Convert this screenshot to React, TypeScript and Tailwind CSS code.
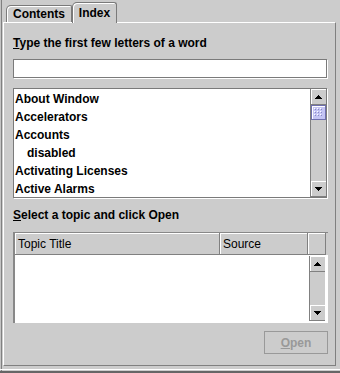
import React from 'react';

const topics = [
  { label: 'About Window', indent: false },
  { label: 'Accelerators', indent: false },
  { label: 'Accounts', indent: false },
  { label: 'disabled', indent: true },
  { label: 'Activating Licenses', indent: false },
  { label: 'Active Alarms', indent: false },
];

function Arrow({ up }: { up: boolean }) {
  const rows = [0, 1, 2, 3];
  return (
    <svg width="7" height="4" viewBox="0 0 7 4" shapeRendering="crispEdges">
      {rows.map(i => {
        const w = up ? 1 + 2 * i : 7 - 2 * i;
        return <rect key={i} x={(7 - w) / 2} y={i} width={w} height={1} fill="#000" />;
      })}
    </svg>
  );
}

function ScrollButton({ up }: { up: boolean }) {
  return (
    <div className="h-[16px] w-full shrink-0 flex items-center justify-center bg-[#cccccc] border-b border-[#808080] shadow-[inset_1px_1px_0_#fff]">
      <Arrow up={up} />
    </div>
  );
}

function Thumb() {
  return (
    <div className="h-[15px] w-full shrink-0 bg-[#c4c4f4] border border-[#6f6fae] shadow-[inset_1px_1px_0_#fff] p-[2px]">
      <svg width="100%" height="100%" shapeRendering="crispEdges">
        <defs>
          <pattern id="bumps" width="3" height="3" patternUnits="userSpaceOnUse">
            <rect x="0" y="0" width="1" height="1" fill="#ffffff" />
            <rect x="1" y="1" width="1" height="1" fill="#8a8ac4" />
          </pattern>
        </defs>
        <rect width="100%" height="100%" fill="url(#bumps)" />
      </svg>
    </div>
  );
}

function ScrollBar({ thumb }: { thumb?: boolean }) {
  return (
    <div className="w-[16px] h-full shrink-0 flex flex-col bg-[#cccccc] border-l border-[#808080]">
      <ScrollButton up />
      {thumb && <Thumb />}
      <div className="flex-1" />
      <ScrollButton up={false} />
    </div>
  );
}

function HeaderCell({ label, w }: { label: string; w: string }) {
  return (
    <div className={`${w} h-full shrink-0 flex items-center pl-[3px] pt-[1px] border-r border-b border-[#808080] shadow-[inset_1px_1px_0_#fff]`}>
      {label}
    </div>
  );
}

export default function App() {
  return (
    <div className="w-[340px] h-[373px] overflow-hidden bg-[#cccccc] flex flex-col text-[12px] leading-[16px] text-black font-['Liberation_Sans',Arial,sans-serif] shadow-[inset_1px_0_0_#c4c4c4,inset_2px_0_0_#808080]">
      <div className="h-[22px] shrink-0 flex items-end pl-[6px]">
        <div className="w-[66px] h-[17px] flex items-center justify-center font-bold border-t border-l border-r border-[#7a7a7a] rounded-tl-[5px] rounded-tr-[2px] shadow-[inset_1px_1px_0_#fff]">
          Contents
        </div>
        <div className="relative z-10 -mb-px w-[45px] h-[21px] flex items-center justify-center font-bold bg-[#cccccc] border-t border-l border-r border-[#7a7a7a] rounded-tl-[5px] rounded-tr-[3px] shadow-[inset_1px_1px_0_#fff]">
          Index
        </div>
      </div>

      <div className="ml-[3px] w-[333px] h-[344px] shrink-0 border border-white border-r-[#808080] border-b-[#808080] pl-[9px] pt-[12px] flex flex-col">
        <div className="font-bold h-[16px]">
          <span className="underline">T</span>ype the first few letters of a word
        </div>
        <div className="mt-[8px] w-[314px] h-[19px] bg-white border border-[#7a7a7a] shadow-[1px_1px_0_#fff]" />

        <div className="mt-[10px] w-[314px] h-[110px] bg-white border border-[#7a7a7a] shadow-[1px_1px_0_#fff] flex">
          <div className="flex-1 flex flex-col pl-[1px] pt-[1px] overflow-hidden">
            {topics.map(t => (
              <div key={t.label} className={`h-[18px] shrink-0 flex items-center font-bold ${t.indent ? 'pl-[12px]' : ''}`}>
                {t.label}
              </div>
            ))}
          </div>
          <ScrollBar thumb />
        </div>

        <div className="mt-[9px] font-bold h-[16px]">
          <span className="underline">S</span>elect a topic and click Open
        </div>

        <div className="mt-[9px] w-[315px] h-[91px] bg-white border-t border-l-2 border-[#888888] flex flex-col">
          <div className="h-[22px] shrink-0 flex bg-[#cccccc]">
            <HeaderCell label="Topic Title" w="w-[205px]" />
            <HeaderCell label="Source" w="w-[88px]" />
            <HeaderCell label="" w="w-[18px]" />
          </div>
          <div className="flex-1 flex justify-end pt-[1px] pr-[3px] pb-[2px]">
            <ScrollBar />
          </div>
        </div>

        <div className="mt-[8px] w-[315px] flex justify-end">
          <div className="w-[64px] h-[23px] flex items-center justify-center font-bold text-[#999999] border border-[#999999]">
            <span className="underline">O</span>pen
          </div>
        </div>
      </div>

      <div className="h-[3px] shrink-0" />
      <div className="h-px shrink-0 bg-white" />
      <div className="h-px shrink-0" />
      <div className="h-[2px] shrink-0 bg-[#666666]" />
    </div>
  );
}
